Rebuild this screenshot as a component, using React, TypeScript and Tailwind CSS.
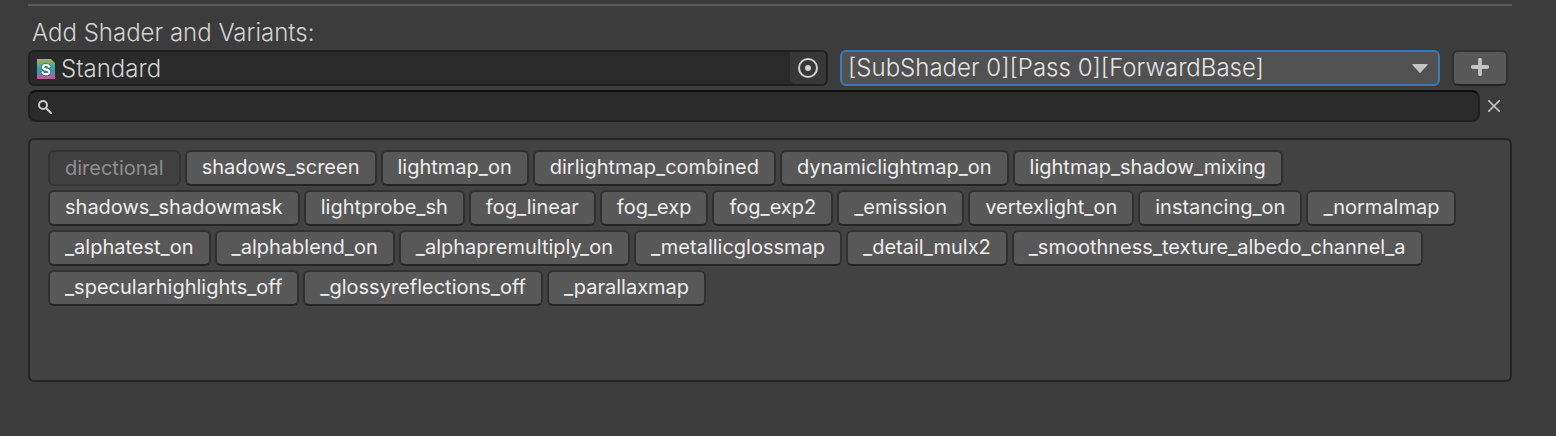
import { useState } from "react";

const keywordRows: string[][] = [
  [
    "directional",
    "shadows_screen",
    "lightmap_on",
    "dirlightmap_combined",
    "dynamiclightmap_on",
    "lightmap_shadow_mixing",
  ],
  [
    "shadows_shadowmask",
    "lightprobe_sh",
    "fog_linear",
    "fog_exp",
    "fog_exp2",
    "_emission",
    "vertexlight_on",
    "instancing_on",
    "_normalmap",
  ],
  [
    "_alphatest_on",
    "_alphablend_on",
    "_alphapremultiply_on",
    "_metallicglossmap",
    "_detail_mulx2",
    "_smoothness_texture_albedo_channel_a",
  ],
  ["_specularhighlights_off", "_glossyreflections_off", "_parallaxmap"],
];

function ShaderIcon() {
  return (
    <svg width="18" height="20" viewBox="0 0 18 20" className="shrink-0" aria-hidden="true">
      <defs>
        <linearGradient id="shader" x1="0" y1="0" x2="0" y2="1">
          <stop offset="0" stopColor="#b9ad4e" />
          <stop offset="0.25" stopColor="#63ab83" />
          <stop offset="0.52" stopColor="#27a5b0" />
          <stop offset="0.75" stopColor="#6c7fb0" />
          <stop offset="1" stopColor="#cb5592" />
        </linearGradient>
      </defs>
      <path d="M0 0h14l4 4v16H0z" fill="url(#shader)" />
      <g fill="none" strokeLinecap="round">
        <path
          d="M12.2 7.6C11.6 6.5 10.4 6 9 6 7.2 6 6 6.9 6 8.2c0 3.3 6.300 1.500 6.300 4.700 0 1.400-1.300 2.300-3.300 2.300-1.600 0-2.900-.6-3.500-1.800"
          stroke="#1d4f5c"
          strokeOpacity="0.45"
          strokeWidth="4"
        />
        <path
          d="M12.2 7.6C11.6 6.5 10.4 6 9 6 7.2 6 6 6.9 6 8.2c0 3.3 6.300 1.500 6.300 4.700 0 1.400-1.300 2.300-3.300 2.300-1.600 0-2.900-.6-3.500-1.800"
          stroke="#fff"
          strokeWidth="2.200"
        />
      </g>
    </svg>
  );
}

function Chip({ label, disabled }: { label: string; disabled: boolean }) {
  return (
    <button
      type="button"
      disabled={disabled}
      className="h-9 shrink-0 rounded-md border-2 border-[#303030] border-b-[#242424] bg-[#585858] px-[15px] pb-0.5 text-xl leading-7 whitespace-nowrap text-[#eeeeee] disabled:border-[#343434] disabled:bg-[#404040] disabled:pb-0 disabled:text-[#8f8f8f]"
    >
      {label}
    </button>
  );
}

export default function App() {
  const [query, setQuery] = useState("");

  return (
    <main className="min-h-screen bg-[#3c3c3c] pt-1 pr-11 pb-13 pl-7 font-['Inter',sans-serif] text-[#d2d2d2]">
      <hr className="border-t-2 border-[#5a5a5a]" />
      <h1 className="pt-3 px-1 text-2xl leading-8 font-[350]">
        <label htmlFor="shader-field" className="block h-8 leading-[30px]">
          Add Shader and Variants:
        </label>
      </h1>

      <div className="grid grid-cols-[4fr_3fr_56px] gap-3 pr-1">
        <div className="flex h-9 min-w-0 items-center rounded-md border-2 border-[#202020] bg-[#2a2a2a] pt-0.5 pl-[7px]">
          <ShaderIcon />
          <input
            id="shader-field"
            type="text"
            readOnly
            value="Standard"
            className="h-7 min-w-0 flex-1 bg-transparent pl-1.5 text-2xl leading-7 font-[350] text-[#d2d2d2] outline-none"
          />
          <button
            type="button"
            aria-label="Select shader"
            className="-mt-0.5 flex h-8 w-9 items-center justify-center rounded-r-sm rounded-bl-md bg-[#373737]"
          >
            <svg width="20" height="20" viewBox="0 0 20 20" aria-hidden="true">
              <circle cx="10" cy="10" r="9" fill="none" stroke="#d0d0d0" strokeWidth="2" />
              <circle cx="10" cy="10" r="3" fill="#d0d0d0" />
            </svg>
          </button>
        </div>

        <div className="relative min-w-0">
          <select
            aria-label="Pass"
            className="block h-9 w-full appearance-none rounded-md border-2 border-[#3a79bb] bg-[#515151] pr-10 pl-1.5 text-2xl leading-8 font-[350] text-[#e4e4e4] outline-none"
          >
            <option>[SubShader 0][Pass 0][ForwardBase]</option>
          </select>
          <svg
            width="16"
            height="10"
            viewBox="0 0 16 10"
            className="pointer-events-none absolute top-3.5 right-3"
            aria-hidden="true"
          >
            <path d="M1 0h14q1 0 .5 1L8.600 8.600q-.6.6-1.200 0L.5 1Q0 0 1 0z" fill="#c4c4c4" />
          </svg>
        </div>

        <button
          type="button"
          aria-label="Add variant"
          className="flex h-9 items-center justify-center rounded-md border-2 border-[#303030] border-b-[#242424] bg-[#585858] pb-0.5"
        >
          <svg width="18" height="18" viewBox="0 0 18 18" aria-hidden="true">
            <path d="M9 1.800v14.400M1.800 9h14.400" stroke="#c4c4c4" strokeWidth="3.800" strokeLinecap="round" />
          </svg>
        </button>
      </div>

      <div className="mt-1 flex items-center pr-3">
        <label className="flex h-8 min-w-0 flex-1 items-center rounded-lg border-2 border-[#202020] border-t-[#0d0d0d] bg-[#2a2a2a] pt-0.5 pl-2">
          <svg width="14" height="14" viewBox="0 0 14 14" className="shrink-0" aria-hidden="true">
            <circle cx="5" cy="5" r="4" fill="none" stroke="#c8c8c8" strokeWidth="2" />
            <path d="M8 8l5 5" stroke="#c8c8c8" strokeWidth="2.200" strokeLinecap="round" />
          </svg>
          <input
            type="text"
            aria-label="Filter keywords"
            value={query}
            onChange={(event) => setQuery(event.target.value)}
            className="h-6 min-w-0 flex-1 bg-transparent px-2 text-xl text-[#d2d2d2] outline-none"
          />
        </label>
        <button
          type="button"
          aria-label="Clear filter"
          onClick={() => setQuery("")}
          className="ml-2 flex size-3 items-center justify-center"
        >
          <svg width="12" height="12" viewBox="0 0 12 12" aria-hidden="true">
            <path d="M.6.6l10.800 10.800M11.400.6L.6 11.400" stroke="#c4c4c4" strokeWidth="1.500" strokeLinecap="round" />
          </svg>
        </button>
      </div>

      <section
        aria-label="Keywords"
        className="mt-4 flex min-h-61 flex-col gap-1 rounded-md border-2 border-[#242424] bg-[#424242] px-4.5 py-2.5"
      >
        {keywordRows.map((row) => (
          <div key={row[0]} className="flex flex-wrap gap-1">
            {row
              .filter((keyword) => keyword.includes(query))
              .map((keyword) => (
                <Chip key={keyword} label={keyword} disabled={keyword === "directional"} />
              ))}
          </div>
        ))}
      </section>
    </main>
  );
}
